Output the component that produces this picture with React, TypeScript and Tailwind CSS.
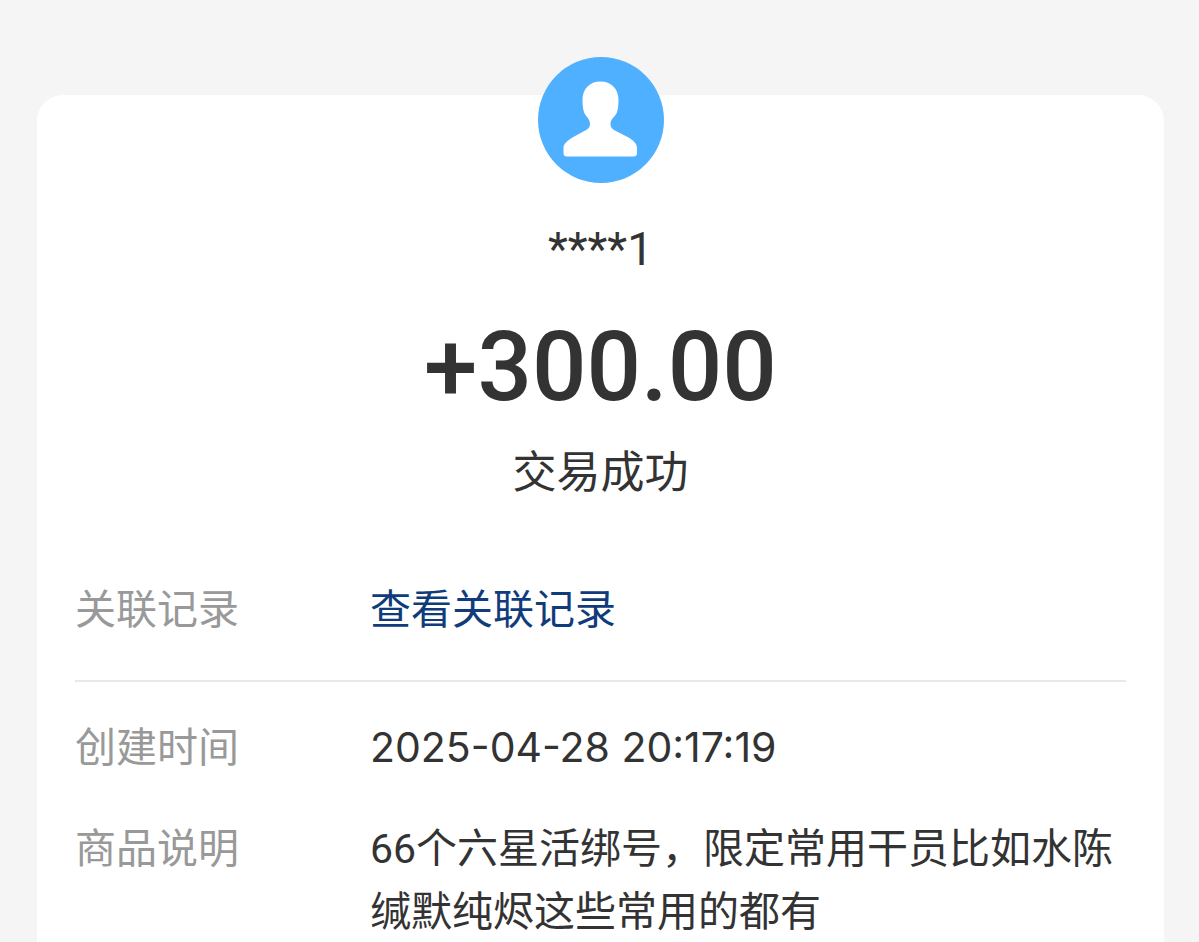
import React from 'react';

const rows = [
  { label: '创建时间', value: '2025-04-28 20:17:19', font: "font-['Inter',sans-serif]" },
  {
    label: '商品说明',
    value: '66个六星活绑号，限定常用干员比如水陈缄默纯烬这些常用的都有',
    font: "font-['Roboto','Noto_Sans_CJK_SC',sans-serif]",
  },
];

function Avatar() {
  return (
    <svg viewBox="0 0 126 126" className="size-[126px]" role="img" aria-label="头像">
      <circle cx="63" cy="63" r="63" fill="#4fb0ff" />
      <path
        fill="#fff"
        d="M62.500 24.500C51.500 24.500 44.500 32 44.500 43C44.500 48 45 53 46.500 56.500C48.500 60 52 62 52 67C52 69.500 51 71 49 72.500L33.500 81C29 84 25.500 87 25.500 91V96Q25.500 99.500 29 99.500H95.500Q99 99.500 99 96V91C99 87 96 84 91.500 81L76 73C73.500 71.500 72.500 69.500 72.500 67C72.500 62 76.500 60 78.500 56.500C80 53 80.500 48 80.500 43C80.500 32 73.500 24.500 62.500 24.500Z"
      />
    </svg>
  );
}

export default function App() {
  return (
    <main className="h-screen overflow-hidden bg-[#f5f5f5] pt-[95px] pr-[35px] pl-[37px] font-['Noto_Sans_CJK_SC',sans-serif] text-[#333]">
      <section className="flex min-h-screen flex-col rounded-[26px] bg-white px-[38px]">
        <header className="-mt-[38px] flex flex-col items-center">
          <Avatar />
          <p className="mt-9 font-['Roboto',sans-serif] text-[46px] leading-[60px]">****1</p>
          <h1 className="mt-[38px] font-['Roboto',sans-serif] text-[96px] leading-[100px] font-medium">+300.00</h1>
          <p className="mt-5 text-[44px] leading-[64px]">交易成功</p>
        </header>
        <dl className="mt-[74px] text-[41px] leading-[63px]">
          <div className="mb-[31px] flex items-baseline border-b-2 border-[#e8e8e8] pb-[42px]">
            <dt className="w-[295px] shrink-0 text-[#999]">关联记录</dt>
            <dd>
              <a href="#records" className="text-[#103c7c]">查看关联记录</a>
            </dd>
          </div>
          {rows.map((r) => (
            <div key={r.label} className="mb-[35px] flex items-baseline">
              <dt className="w-[295px] shrink-0 text-[#999]">{r.label}</dt>
              <dd className={r.font}>{r.value}</dd>
            </div>
          ))}
        </dl>
      </section>
    </main>
  );
}
